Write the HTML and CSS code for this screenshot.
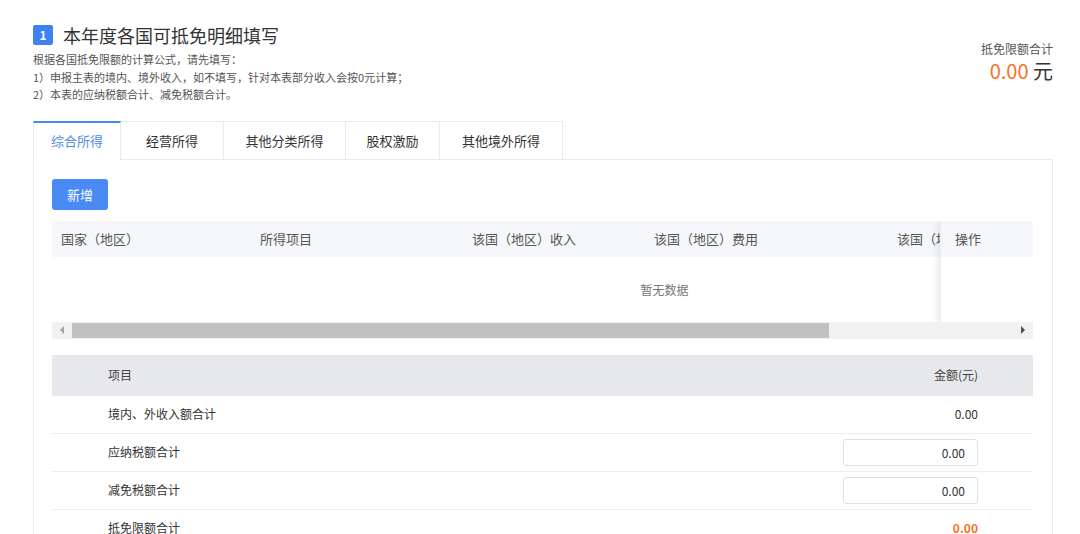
FILE: index.html
```html
<!DOCTYPE html>
<html lang="zh-CN">
<head>
  <meta charset="UTF-8">
  <title>本年度各国可抵免明细填写</title>
  <link rel="stylesheet" href="styles.css">
</head>
<body>
  <div class="page">
    <div class="head">
      <div class="intro">
        <h1 class="title"><span class="badge">1</span>本年度各国可抵免明细填写</h1>
        <p class="desc">根据各国抵免限额的计算公式，请先填写：</p>
        <p class="desc">1）申报主表的境内、境外收入，如不填写，针对本表部分收入会按0元计算；</p>
        <p class="desc">2）本表的应纳税额合计、减免税额合计。</p>
      </div>
      <div class="total">
        <div class="total-label">抵免限额合计</div>
        <div class="total-value"><span class="num">0.00</span> 元</div>
      </div>
    </div>

    <div class="tabs">
      <div class="tab active">综合所得</div>
      <div class="tab">经营所得</div>
      <div class="tab">其他分类所得</div>
      <div class="tab">股权激励</div>
      <div class="tab">其他境外所得</div>
    </div>

    <div class="panel">
      <button class="btn-add">新增</button>

      <div class="grid">
        <div class="grid-main">
          <div class="grid-head">
            <div class="col c1">国家（地区）</div>
            <div class="col c2">所得项目</div>
            <div class="col c3">该国（地区）收入</div>
            <div class="col c4">该国（地区）费用</div>
            <div class="col c5">该国（地区）应纳税所得额</div>
            <div class="col c6"></div>
          </div>
          <div class="grid-empty">暂无数据</div>
        </div>
        <div class="grid-fixed">
          <div class="fixed-head">操作</div>
          <div class="fixed-body"></div>
        </div>
        <div class="scrollbar">
          <span class="arrow left"></span>
          <span class="thumb"></span>
          <span class="arrow right"></span>
        </div>
      </div>

      <table class="summary">
        <thead>
          <tr><th class="name">项目</th><th class="amt">金额(元)</th></tr>
        </thead>
        <tbody>
          <tr><td class="name">境内、外收入额合计</td><td class="amt">0.00</td></tr>
          <tr><td class="name">应纳税额合计</td><td class="amt"><input class="amt-input" value="0.00"></td></tr>
          <tr><td class="name">减免税额合计</td><td class="amt"><input class="amt-input" value="0.00"></td></tr>
          <tr><td class="name">抵免限额合计</td><td class="amt strong">0.00</td></tr>
        </tbody>
      </table>
    </div>
  </div>
</body>
</html>
```

FILE: styles.css
```css
body { margin: 0; background: #fff; font-family: "Noto Sans CJK SC", "Noto Sans", sans-serif; color: #333; }
.page { padding: 23px 27px 0 33px; }

.head { display: flex; justify-content: space-between; align-items: flex-start; }
.title { margin: 0 0 4px; display: flex; align-items: center; font-size: 18px; font-weight: normal; line-height: 24px; color: #333; }
.badge { width: 20px; height: 20px; margin-right: 10px; border-radius: 2px; background: #3f80f2; color: #fff; font-size: 12px; font-weight: bold; line-height: 20px; text-align: center; }
.desc { margin: 0; font-size: 11px; line-height: 17.5px; color: #555; }
.total { margin-top: 17px; text-align: right; }
.total-label { font-size: 12px; line-height: 18px; color: #555; }
.total-value { font-size: 20px; line-height: 26px; color: #333; }
.total-value .num { color: #f5731f; }

.tabs { display: flex; margin-top: 17px; }
.tab { height: 38px; line-height: 37px; padding: 0; font-size: 13px; color: #333; text-align: center; white-space: nowrap; border: 1px solid #eaeaea; border-left: none; border-bottom: none; box-sizing: border-box; background: #fff; }
.tab:nth-child(1) { width: 88px; border-left: 1px solid #eaeaea; }
.tab:nth-child(2) { width: 103px; }
.tab:nth-child(3) { width: 122px; }
.tab:nth-child(4) { width: 94px; }
.tab:nth-child(5) { width: 123px; }
.tab.active { color: #4d8ae8; border-top: 2px solid #4a89f0; line-height: 36px; position: relative; margin-bottom: -1px; height: 39px; }

.panel { border: 1px solid #ececec; padding: 19px 19px 0 18px; }
.btn-add { display: block; width: 56px; height: 31px; border: none; border-radius: 3px; background: #4a8af4; color: #fff; font-family: inherit; font-size: 13px; padding: 0; }

.grid { margin-top: 11px; position: relative; overflow: hidden; }
.grid-main { width: 1225px; }
.grid-head { display: flex; height: 36px; background: #f5f7fa; font-size: 13px; color: #555; line-height: 36px; }
.col { padding-left: 9px; box-sizing: border-box; white-space: nowrap; overflow: hidden; }
.c1 { width: 199px; }
.c2 { width: 212px; }
.c3 { width: 182px; }
.c4 { width: 243px; }
.c5 { width: 53px; }
.c6 { flex: 1; }
.grid-empty { height: 65px; line-height: 65px; text-align: center; font-size: 12px; color: #777; }
.grid-fixed { position: absolute; top: 0; right: 0; width: 92px; background: #fff; box-shadow: -3px 0 6px rgba(0, 0, 0, 0.08); border-left: 1px solid #ebeef5; }
.fixed-head { height: 36px; line-height: 36px; padding-left: 14px; background: #f5f7fa; font-size: 13px; color: #555; }
.fixed-body { height: 65px; }
.scrollbar { display: flex; align-items: center; height: 17px; background: #f1f1f1; position: relative; }
.arrow { width: 0; height: 0; border-top: 4px solid transparent; border-bottom: 4px solid transparent; }
.arrow.left { margin-left: 8px; border-right: 4px solid #a3a3a3; }
.arrow.right { margin-left: auto; margin-right: 8px; border-left: 4px solid #505050; }
.thumb { width: 757px; height: 15px; margin-left: 8px; background: #c1c1c1; }

.summary { width: 100%; margin-top: 16px; border-collapse: collapse; font-size: 12px; color: #333; }
.summary th { height: 41px; padding: 0; line-height: 16px; background: #e6e8eb; font-weight: normal; color: #444; }
.summary td { height: 37px; padding: 0; line-height: 16px; border-bottom: 1px solid #eeeeee; }
.summary .name { text-align: left; padding-left: 56px; }
.summary .amt { text-align: right; padding-right: 55px; }
.summary .strong { color: #f5731f; font-weight: bold; }
.amt-input { width: 135px; height: 27px; box-sizing: border-box; border: 1px solid #dcdfe6; border-radius: 3px; padding: 0 12px; text-align: right; font-family: inherit; font-size: 12px; color: #333; vertical-align: middle; }
```
